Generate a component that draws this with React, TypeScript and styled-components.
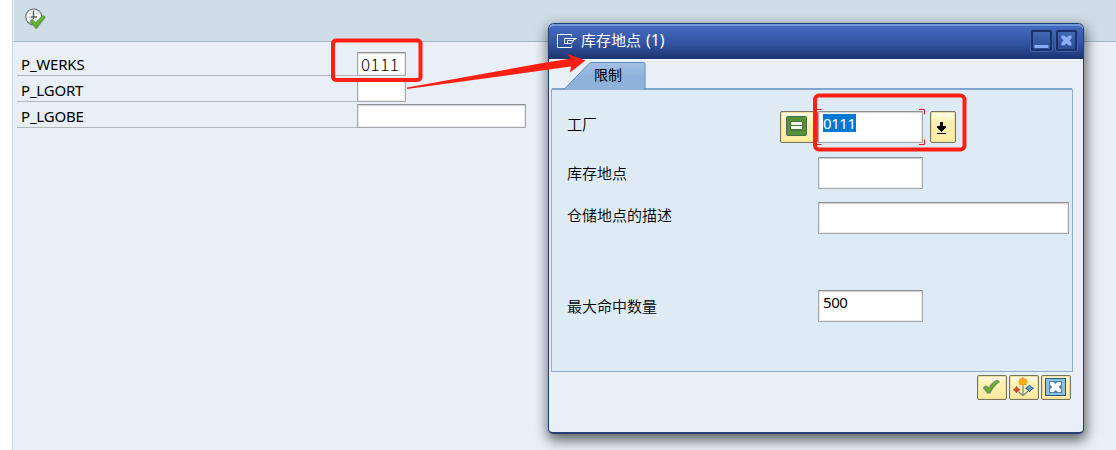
import React from 'react';
import styled, { createGlobalStyle } from 'styled-components';

const GlobalStyle = createGlobalStyle`
  * { box-sizing: border-box; }
  body { margin: 0; background: #fff; overflow: hidden; }
`;

const Screen = styled.div`
  position: relative;
  width: 1116px;
  height: 450px;
  overflow: hidden;
  padding-left: 12px;
  color: #000;
  font-family: 'Noto Sans', 'Noto Sans CJK SC', sans-serif;
  font-size: 15px;
  background: linear-gradient(90deg, #fff 4px, #fafbfc 12px);
`;

const Workspace = styled.main`
  height: 450px;
  border-left: 1px solid #cbd7e2;
  background: #e8eff6;
`;

const Toolbar = styled.div`
  height: 42px;
  padding: 8px 0 0 11px;
  border-left: 1px solid #e8f0f6;
  border-bottom: 1px solid #a6b6c4;
  background: #cfdde7;
  svg { display: block; }
`;

const Form = styled.div`
  padding: 8px 0 0 4px;
`;

const FormRow = styled.div`
  display: flex;
  align-items: flex-end;
  height: 26px;
`;

const FormLabel = styled.label`
  width: 340px;
  height: 26px;
  padding-left: 4px;
  border-bottom: 1px solid #b1b7bc;
  line-height: 28px;
  letter-spacing: -0.2px;
`;

const Field = styled.div<{ $w: number; $h: number }>`
  flex: none;
  width: ${(p) => p.$w}px;
  height: ${(p) => p.$h}px;
  border: 1px solid #a5a8ab;
  border-top-color: #8d9194;
  border-radius: 1px;
  background: #fff;
  box-shadow: inset 0 1px 1px #d0d2d4, inset 0 0 1px 1px #e9eaeb;
`;

const Code = styled.span`
  display: block;
  padding-left: 3px;
  font-family: 'Noto Sans CJK SC', sans-serif;
  font-weight: 300;
  font-size: 17px;
  letter-spacing: 0.5px;
  line-height: 21px;
`;

const Dialog = styled.section`
  position: absolute;
  left: 548px;
  top: 23px;
  width: 536px;
  height: 411px;
  border: 1px solid #203e7c;
  border-bottom: 2px solid #263f7c;
  border-radius: 6px 6px 5px 5px;
  background: #e8eff6;
  box-shadow: 1px 5px 13px 1px rgba(0, 0, 0, 0.62);
`;

const TitleBar = styled.header`
  display: flex;
  align-items: center;
  height: 35px;
  padding: 0 6px 4px 7px;
  border-top: 2px solid #7297d5;
  border-radius: 5px 5px 0 0;
  color: #fff;
  background: linear-gradient(#456bc1, #3152a0 55%, #1a3470);
  svg { display: block; }
`;

const Title = styled.h1`
  flex: 1;
  margin: -1px 0 0 4px;
  font-weight: 400;
  font-size: 15px;
  line-height: 20px;
  word-spacing: 1px;
`;

const Count = styled.span`
  font-size: 16px;
`;

const WindowButton = styled.button`
  width: 21px;
  height: 21px;
  margin: -1px 0 0 4px;
  padding: 0;
  border: 2px solid #1b3267;
  border-radius: 2px;
  background: linear-gradient(#4268b5, #2d4d96);
  box-shadow: 0 0 0 1px #3d61ad;
`;

const TabStrip = styled.div`
  display: flex;
  height: 30px;
  padding: 2px 0 0 14px;
  border-top: 1px solid #fff;
`;

const Tab = styled.div`
  position: relative;
  width: 83px;
  height: 28px;
  svg { display: block; }
  span {
    position: absolute;
    left: 31px;
    top: 3px;
    font-size: 14px;
    line-height: 20px;
  }
`;

const Panel = styled.div`
  width: 522px;
  height: 284px;
  margin: -1px 0 1px 2px;
  padding: 21px 0 0 15px;
  border: 1px solid #8faece;
  border-top: 2px solid #7fa5ce;
  border-radius: 2px 2px 0 0;
  background: #deebf5;
`;

const Row = styled.div<{ $gap: number }>`
  display: flex;
  height: 32px;
  margin-bottom: ${(p) => p.$gap}px;
`;

const Label = styled.label<{ $top: number }>`
  width: 213px;
  padding-top: ${(p) => p.$top}px;
  font-family: 'Noto Sans CJK SC', sans-serif;
  font-weight: 350;
  font-size: 15px;
  line-height: 20px;
`;

const Operator = styled.div`
  width: 38px;
`;

const Button = styled.button<{ $w: number; $h: number }>`
  display: flex;
  align-items: center;
  justify-content: center;
  width: ${(p) => p.$w}px;
  height: ${(p) => p.$h}px;
  padding: 0;
  border: 1px solid #79745b;
  border-radius: 2px;
  background: linear-gradient(#fffbea, #fff0b0 35%, #feeb9e);
  box-shadow: inset 0 0 0 1px #f1dc98;
`;

const OperatorButton = styled(Button)`
  padding: 0 5px 2px 0;
`;

const PickButton = styled(Button)`
  margin-left: 7px;
  padding: 2px 3px 0 0;
`;

const FooterButton = styled(Button)`
  padding: 0 2px 2px 0;
`;

const Value = styled.span<{ $selected?: boolean }>`
  display: inline-block;
  height: 18px;
  margin: 2px 0 0 4px;
  font-size: 15px;
  line-height: 18px;
  letter-spacing: -0.4px;
  vertical-align: top;
  color: ${(p) => (p.$selected ? '#fff' : '#000')};
  background: ${(p) => (p.$selected ? '#0078d7' : 'transparent')};
`;

const Footer = styled.footer`
  display: flex;
  gap: 2px;
  justify-content: flex-end;
  padding: 2px 12px 0 0;
`;

const Markup = styled.svg`
  position: absolute;
  left: 0;
  top: 0;
  pointer-events: none;
`;

const ExecuteIcon = () => (
  <svg width="22" height="22" viewBox="0 0 22 22">
    <circle cx="8.7" cy="8.8" r="8" fill="#f5f6f6" stroke="#77797a" strokeWidth="1.300" />
    <path d="M3.500 9h2M4.500 5l1 1M12.500 5l-1 1" stroke="#a0a3a4" />
    <path d="M8.500 2.500V11M6 9h6" stroke="#5b5e5f" strokeWidth="1.400" />
    <path d="M4.800 13.500l2.400-2.300 3.600 3.300 6.700-7.300 3 1.800-9.200 12z" fill="#56a92b" stroke="#73936d" strokeWidth=".8" />
    <path d="M7 12.800l4 4L18 9" fill="none" stroke="#78c448" strokeWidth="1" />
  </svg>
);

const ExitIcon = () => (
  <svg width="21" height="16" viewBox="0 0 21 16" fill="none" stroke="#fff">
    <path d="M15.500 3.500v-2h-14v13h14v-2" />
    <path d="M8.500 5.500h12l-4 2M8.500 5.500v5h7l2-3M11.500 7.500h5M11.500 7.500v3" />
  </svg>
);

const CloseIcon = () => (
  <svg width="17" height="17" viewBox="-2 -2 17 17">
    <path d="M1.500 1.500h2.700l2.300 2 2.300-2h2.700v2.700l-2 2.300 2 2.300v2.700H8.800l-2.300-2-2.300 2H1.500V8.800l2-2.300-2-2.300z" fill="#8cabf8" />
  </svg>
);

const MinimizeIcon = () => (
  <svg width="17" height="17" viewBox="0 0 17 17">
    <path d="M1.500 14.500h14" stroke="#8cabf8" strokeWidth="3" />
  </svg>
);

const EqualIcon = () => (
  <svg width="21" height="20" viewBox="0 0 21 20">
    <rect x=".5" y=".5" width="20" height="19" rx="1" fill="#57913b" stroke="#3f704d" />
    <rect x="4" y="5" width="13" height="10" fill="#427b3b" />
    <path d="M5 7.500h11M5 11.500h11" stroke="#f4f5ee" strokeWidth="3" />
  </svg>
);

const DownIcon = () => (
  <svg width="9" height="12" viewBox="0 0 9 12">
    <path d="M3 0h3v4h3v2H8v1H7v1H6v1H5v1H4V9H3V8H2V7H1V6H0V4h3zM0 11h9v1H0z" shapeRendering="crispEdges" />
  </svg>
);

const CheckIcon = () => (
  <svg width="19" height="16" viewBox="0 0 19 16">
    <path d="M1.500 9l2.200-2 3 2C9 5.500 12 2.200 15.300 1.200l2 1.700c-4 2.500-6.800 6.300-9.300 11l-2.300.3z" fill="#5eaa22" stroke="#75877a" strokeWidth="1.100" />
    <path d="M3.500 9l3.200 2.500C9 7.500 12 4.500 16 2.700" fill="none" stroke="#7cc034" />
  </svg>
);

const OptionsIcon = () => (
  <svg width="21" height="20" viewBox="0 0 21 20">
    <path d="M10 9v10M5.500 14.500l3.500 3.500h2l4-4" fill="none" stroke="#778391" strokeWidth="1.200" />
    <path d="M10 .3l1.300 1.700h2v1.500l1.200 1.300-1.200 1.300v1.400h-2L10 9 8.700 7.500h-2V6.100L5.500 4.800l1.200-1.300V2h2z" fill="#ffac12" stroke="#e79126" strokeWidth=".7" />
    <path d="M3.500 9.500l1 2 2.200 1.200-2.200 1.300-1 2-1-2L.3 12.700l2.200-1.200z" fill="#d64928" stroke="#ae3424" strokeWidth=".8" />
    <path d="M16.500 8l1.200 1.700 2.800 1.600-2.800 1.700-1.200 1.700-1.300-1.700-2.700-1.700 2.700-1.600z" fill="#5e9fcb" stroke="#265d91" />
  </svg>
);

const CancelIcon = () => (
  <svg width="21" height="18" viewBox="0 0 21 18">
    <rect x=".5" y=".5" width="20" height="17" fill="#94bbd7" stroke="#165d88" />
    <rect x="4" y="3" width="13" height="12" fill="#4289b4" />
    <path d="M5 4h3.300l2.200 2 2.200-2H16v2.800L13.800 9l2.200 2.200V14h-3.300l-2.200-2-2.200 2H5v-2.800L7.200 9 5 6.800z" fill="#fff" />
  </svg>
);

export default function App() {
  return (
    <Screen>
      <GlobalStyle />
      <Workspace>
        <Toolbar><ExecuteIcon /></Toolbar>
        <Form>
          <FormRow>
            <FormLabel>P_WERKS</FormLabel>
            <Field $w={49} $h={24}><Code>0111</Code></Field>
          </FormRow>
          <FormRow>
            <FormLabel>P_LGORT</FormLabel>
            <Field $w={49} $h={24} />
          </FormRow>
          <FormRow>
            <FormLabel>P_LGOBE</FormLabel>
            <Field $w={169} $h={24} />
          </FormRow>
        </Form>
      </Workspace>

      <Dialog>
        <TitleBar>
          <ExitIcon />
          <Title>库存地点 <Count>(1)</Count></Title>
          <WindowButton><MinimizeIcon /></WindowButton>
          <WindowButton><CloseIcon /></WindowButton>
        </TitleBar>
        <TabStrip>
          <Tab>
            <svg width="83" height="28" viewBox="0 0 83 28">
              <defs>
                <linearGradient id="tabFill" x1="0" y1="0" x2="0" y2="1">
                  <stop offset="0" stopColor="#a3c2e2" />
                  <stop offset=".5" stopColor="#8eb1db" />
                  <stop offset="1" stopColor="#8eb2da" />
                </linearGradient>
              </defs>
              <path d="M.5 28L26 1.500Q27 .5 29 .5h51.500q1.500 0 1.500 1.500v26" fill="url(#tabFill)" stroke="#5f8aba" />
            </svg>
            <span>限制</span>
          </Tab>
        </TabStrip>
        <Panel>
          <Row $gap={14}>
            <Label $top={3}>工厂</Label>
            <Operator><OperatorButton $w={38} $h={32}><EqualIcon /></OperatorButton></Operator>
            <Field $w={105} $h={32}><Value $selected>0111</Value></Field>
            <PickButton $w={26} $h={32}><DownIcon /></PickButton>
          </Row>
          <Row $gap={13}>
            <Label $top={6}>库存地点</Label>
            <Operator />
            <Field $w={105} $h={32} />
          </Row>
          <Row $gap={56}>
            <Label $top={3}>仓储地点的描述</Label>
            <Operator />
            <Field $w={251} $h={32} />
          </Row>
          <Row $gap={0}>
            <Label $top={6}>最大命中数量</Label>
            <Operator />
            <Field $w={105} $h={32}><Value>500</Value></Field>
          </Row>
        </Panel>
        <Footer>
          <FooterButton $w={30} $h={25}><CheckIcon /></FooterButton>
          <FooterButton $w={30} $h={25}><OptionsIcon /></FooterButton>
          <FooterButton $w={30} $h={25}><CancelIcon /></FooterButton>
        </Footer>
      </Dialog>

      <Markup width="1116" height="450" fill="none">
        <path d="M816.500 114v-4.500h5M919 109.500h5.500v5M816.500 139v5.500h5M919 144.500h5.500v-5" stroke="#d8191c" />
        <rect x="333" y="40.500" width="87.500" height="39.500" rx="3" stroke="#ff2014" strokeWidth="4" />
        <rect x="815" y="95.500" width="149.500" height="54" rx="4" stroke="#ff2014" strokeWidth="4" />
        <path d="M407 87.500L540 63.500L571 58.500L567 53.800L585.500 60.500L570 72.500L571 66.500L540 70.800L407 89z" fill="#ff2014" />
      </Markup>
    </Screen>
  );
}
